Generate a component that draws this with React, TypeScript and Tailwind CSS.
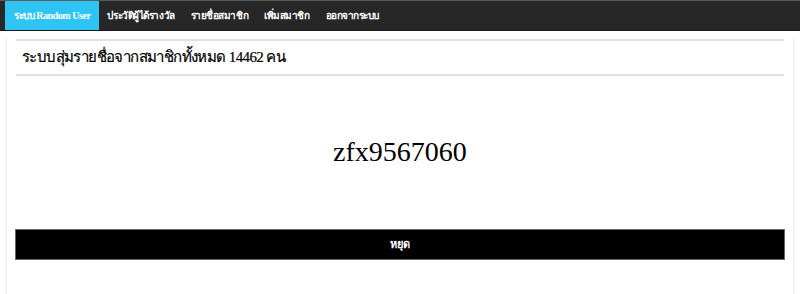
const navItems = [
  { label: "ระบบ Random User", active: true },
  { label: "ประวัติผู้ได้รางวัล", active: false },
  { label: "รายชื่อสมาชิก", active: false },
  { label: "เพิ่มสมาชิก", active: false },
  { label: "ออกจากระบบ", active: false },
];

const App = () => {
  return (
    <div className="w-[800px] h-[294px] bg-white overflow-hidden font-['Liberation_Serif',serif]">
      <nav className="h-[31px] bg-[#272727] border-t border-[#5a5a5a] border-b border-b-[#1a1a1a] flex pl-[5px]">
        {navItems.map((item) => (
          <a
            key={item.label}
            className={`flex items-center px-[8px] text-[10px] font-bold text-white tracking-[-0.45px] ${
              item.active ? "bg-[#2ec5f5] px-[9px]" : ""
            }`}
          >
            {item.label}
          </a>
        ))}
      </nav>

      <div className="mx-[5px] h-[263px] border-x-2 border-[#f2f2f2] px-[8px]">
        <div className="mx-[1px] mt-[8px] border-t-2 border-b-2 border-[#e2e2e2] h-[37px] flex items-center px-[6px]">
          <h3 className="text-[15px] font-normal text-black tracking-[-0.6px] [-webkit-text-stroke:0.2px_black]">
            ระบบสุ่มรายชื่อจากสมาชิกทั้งหมด 14462 คน
          </h3>
        </div>

        <div className="h-[153px] flex items-center justify-center pb-[2px]">
          <span className="text-[28px] text-black">zfx9567060</span>
        </div>

        <button className="w-full h-[31px] bg-black border border-[#666] text-white text-[11px] font-bold flex items-center justify-center">
          หยุด
        </button>
      </div>
    </div>
  );
};

export default App;
